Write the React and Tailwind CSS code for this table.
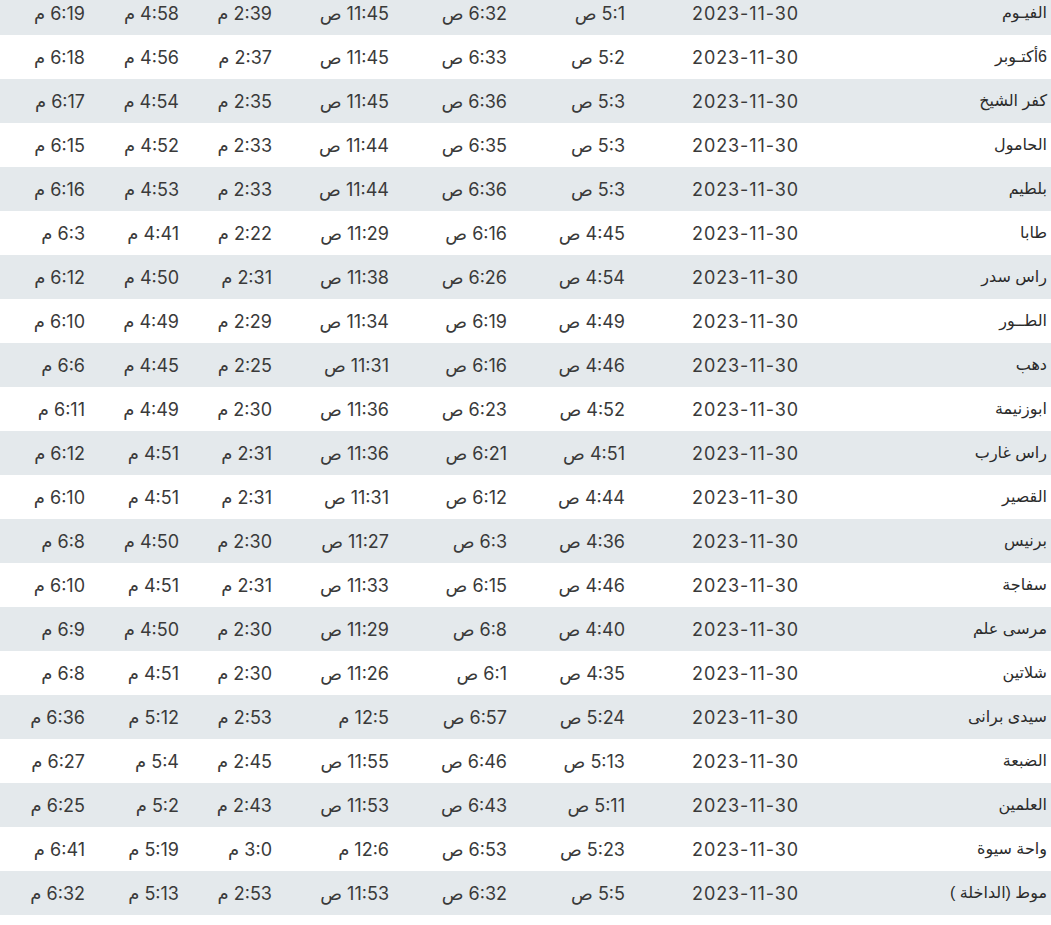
import React from "react";

const rows = [
  ["الفيـوم", "5:1", "6:32", "11:45 ص", "2:39", "4:58", "6:19"],
  ["6أكتـوبر", "5:2", "6:33", "11:45 ص", "2:37", "4:56", "6:18"],
  ["كفر الشيخ", "5:3", "6:36", "11:45 ص", "2:35", "4:54", "6:17"],
  ["الحامول", "5:3", "6:35", "11:44 ص", "2:33", "4:52", "6:15"],
  ["بلطيم", "5:3", "6:36", "11:44 ص", "2:33", "4:53", "6:16"],
  ["طابا", "4:45", "6:16", "11:29 ص", "2:22", "4:41", "6:3"],
  ["راس سدر", "4:54", "6:26", "11:38 ص", "2:31", "4:50", "6:12"],
  ["الطــور", "4:49", "6:19", "11:34 ص", "2:29", "4:49", "6:10"],
  ["دهب", "4:46", "6:16", "11:31 ص", "2:25", "4:45", "6:6"],
  ["ابوزنيمة", "4:52", "6:23", "11:36 ص", "2:30", "4:49", "6:11"],
  ["راس غارب", "4:51", "6:21", "11:36 ص", "2:31", "4:51", "6:12"],
  ["القصير", "4:44", "6:12", "11:31 ص", "2:31", "4:51", "6:10"],
  ["برنيس", "4:36", "6:3", "11:27 ص", "2:30", "4:50", "6:8"],
  ["سفاجة", "4:46", "6:15", "11:33 ص", "2:31", "4:51", "6:10"],
  ["مرسى علم", "4:40", "6:8", "11:29 ص", "2:30", "4:50", "6:9"],
  ["شلاتين", "4:35", "6:1", "11:26 ص", "2:30", "4:51", "6:8"],
  ["سيدى برانى", "5:24", "6:57", "12:5 م", "2:53", "5:12", "6:36"],
  ["الضبعة", "5:13", "6:46", "11:55 ص", "2:45", "5:4", "6:27"],
  ["العلمين", "5:11", "6:43", "11:53 ص", "2:43", "5:2", "6:25"],
  ["واحة سيوة", "5:23", "6:53", "12:6 م", "3:0", "5:19", "6:41"],
  ["موط (الداخلة )", "5:5", "6:32", "11:53 ص", "2:53", "5:13", "6:32"],
];

function Cell({ children, city, date }) {
  return (
    <div
      className={
        "flex items-center justify-start pr-[4px] whitespace-nowrap " +
        (city
          ? "text-[16px] text-[#2b2b2b] font-['Liberation_Sans','DejaVu_Sans',sans-serif]"
          : "text-[18px] text-[#3a3a3a] font-['Inter','DejaVu_Sans',sans-serif]") +
        (date ? " tracking-[0.9px]" : "")
      }
    >
      {children}
    </div>
  );
}

export default function App() {
  return (
    <div className="w-[1051px] h-[925px] overflow-hidden bg-white">
      <div dir="rtl" className="-mt-[9px] flex flex-col">
        {rows.map((r, i) => (
          <div
            key={i}
            className={
              "grid grid-cols-[248px_174px_118px_118px_117px_93px_94px_89px] h-[44px] " +
              (i % 2 === 0 ? "bg-[#e4e9ec]" : "bg-white")
            }
          >
            <Cell city>{r[0]}</Cell>
            <Cell date>2023-11-30</Cell>
            <Cell>{r[1]} ص</Cell>
            <Cell>{r[2]} ص</Cell>
            <Cell>{r[3]}</Cell>
            <Cell>{r[4]} م</Cell>
            <Cell>{r[5]} م</Cell>
            <Cell>{r[6]} م</Cell>
          </div>
        ))}
      </div>
    </div>
  );
}
